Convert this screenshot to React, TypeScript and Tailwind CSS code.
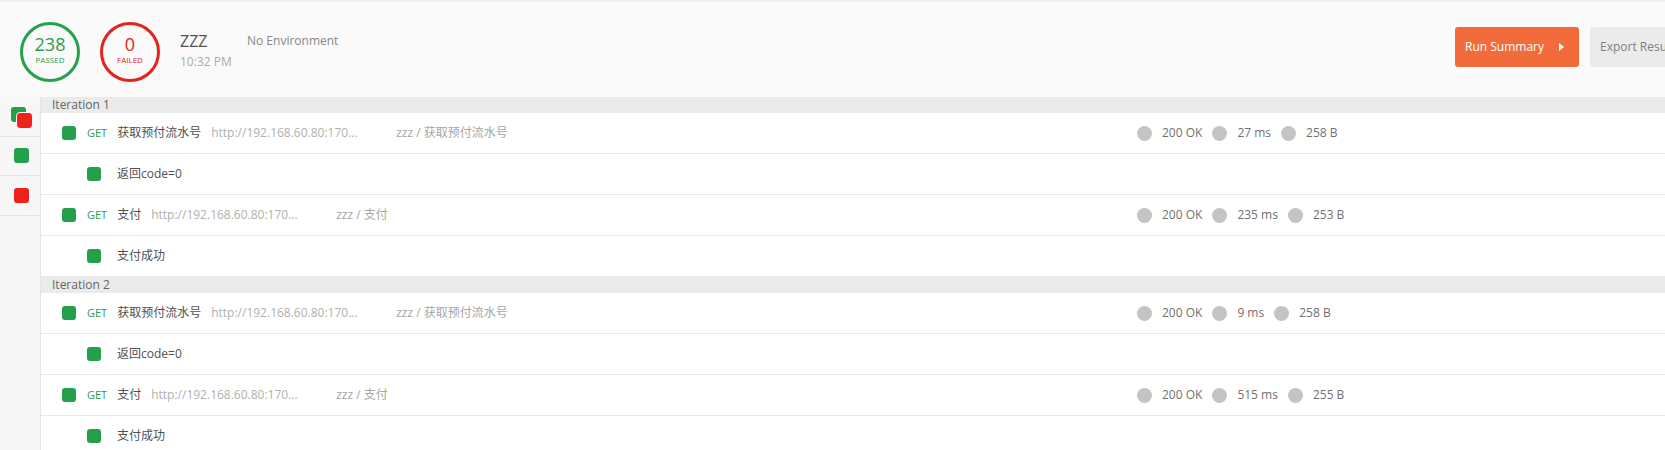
import React from "react"

const FONT = { fontFamily: '"Open Sans", "Noto Sans CJK SC", sans-serif' }

type Req = {
  name: string
  path: string
  test: string
  time: string
  size: string
}

const iterations: { title: string; requests: Req[] }[] = [
  {
    title: "Iteration 1",
    requests: [
      { name: "获取预付流水号", path: "zzz / 获取预付流水号", test: "返回code=0", time: "27 ms", size: "258 B" },
      { name: "支付", path: "zzz / 支付", test: "支付成功", time: "235 ms", size: "253 B" },
    ],
  },
  {
    title: "Iteration 2",
    requests: [
      { name: "获取预付流水号", path: "zzz / 获取预付流水号", test: "返回code=0", time: "9 ms", size: "258 B" },
      { name: "支付", path: "zzz / 支付", test: "支付成功", time: "515 ms", size: "255 B" },
    ],
  },
]

function StatCircle({ value, label, tone }: { value: string; label: string; tone: "pass" | "fail" }) {
  const pass = tone === "pass"
  return (
    <div
      className={[
        "w-[60px] h-[60px] rounded-full border-[3px] flex flex-col items-center pt-[8px] shrink-0",
        pass ? "border-[#27a04c] text-[#27a04c]" : "border-[#e5231b] text-[#e5231b]",
      ].join(" ")}
    >
      <span className="text-[18px] leading-[22px]">{value}</span>
      <span className="text-[8px] leading-[10px] uppercase">{label}</span>
    </div>
  )
}

function Dot() {
  return <span className="w-[15px] h-[15px] rounded-full bg-[#c4c4c4] shrink-0" />
}

function Stats({ time, size }: { time: string; size: string }) {
  return (
    <div className="flex items-center text-[12px] text-[#707070]">
      <Dot />
      <span className="ml-[10px] mr-[10px]">200 OK</span>
      <Dot />
      <span className="ml-[10px] mr-[10px]">{time}</span>
      <Dot />
      <span className="ml-[10px]">{size}</span>
    </div>
  )
}

function Square({ color = "green" }: { color?: "green" | "red" }) {
  return (
    <span
      className={[
        "w-[14px] h-[14px] rounded-[3px] shrink-0",
        color === "green" ? "bg-[#22a04a]" : "bg-[#ee2218]",
      ].join(" ")}
    />
  )
}

export default function App() {
  return (
    <div className="w-[1665px] h-[450px] overflow-hidden bg-white" style={FONT}>
      {/* Header */}
      <div className="h-[97px] bg-[#fafafa] border-t-2 border-[#efefef] flex items-start overflow-hidden">
        <div className="flex items-start pl-[20px] pt-[20px] gap-[20px]">
          <StatCircle value="238" label="Passed" tone="pass" />
          <StatCircle value="0" label="Failed" tone="fail" />
          <div className="flex flex-col w-[67px] pt-[8px]">
            <span className="text-[16px] leading-[22px] text-[#505050]">ZZZ</span>
            <span className="text-[12px] leading-[16px] text-[#aaaaaa] mt-[2px]">10:32 PM</span>
          </div>
        </div>
        <span className="text-[12px] leading-[16px] text-[#888888] pt-[31px]">No Environment</span>

        <div className="ml-auto -mr-[25px] flex items-center gap-[11px] pt-[25px]">
          <button className="h-[40px] w-[124px] rounded-[3px] bg-[#f26b3a] text-white text-[12px] flex items-center pl-[10px] pr-[15px]">
            <span>Run Summary</span>
            <svg className="ml-auto" width="5" height="8" viewBox="0 0 5 8">
              <path d="M0 0 L5 4 L0 8 Z" fill="#ffffff" />
            </svg>
          </button>
          <button className="h-[40px] w-[100px] rounded-[3px] bg-[#ebebeb] text-[#808080] text-[12px] text-left pl-[10px] whitespace-nowrap">
            Export Results
          </button>
        </div>
      </div>

      {/* Body */}
      <div className="flex h-[353px]">
        {/* Sidebar */}
        <div className="w-[41px] shrink-0 bg-[#f7f7f7] border-r border-[#e6e6e6] flex flex-col">
          <div className="h-[39.5px] border-b border-[#e6e6e6] relative">
            <span className="absolute left-[11px] top-[10px] w-[15px] h-[15px] rounded-[3px] bg-[#22a04a]" />
            <span className="absolute left-[16px] top-[15px] w-[17px] h-[17px] rounded-[4px] bg-[#ee2218] border-[1.5px] border-[#f7f7f7]" />
          </div>
          <div className="h-[39.5px] border-b border-[#e6e6e6] flex items-center pl-[14px]">
            <span className="w-[15px] h-[15px] rounded-[3px] bg-[#22a04a]" />
          </div>
          <div className="h-[39.5px] border-b border-[#e6e6e6] flex items-center pl-[14px]">
            <span className="w-[15px] h-[15px] rounded-[3px] bg-[#ee2218]" />
          </div>
        </div>

        {/* Results */}
        <div className="flex-1 flex flex-col">
          {iterations.map((it) => (
            <div key={it.title}>
              <div className="h-[16px] bg-[#ebebeb] pl-[11px] text-[12px] leading-[16px] text-[#666666]">
                {it.title}
              </div>
              {it.requests.map((r) => (
                <React.Fragment key={r.name}>
                  <div className="h-[41px] border-b border-[#e8e8e8] grid grid-cols-[1096px_1fr] items-center">
                    <div className="flex items-center pl-[21px] min-w-0">
                      <Square />
                      <span className="ml-[11px] text-[11px] text-[#2a9d4b]">GET</span>
                      <span className="ml-[10px] text-[12px] text-[#505050]">{r.name}</span>
                      <span className="ml-[10px] w-[185px] text-[12px] text-[#b0b0b0] whitespace-nowrap">
                        http://192.168.60.80:170...
                      </span>
                      <span className="text-[12px] text-[#a6a6a6]">{r.path}</span>
                    </div>
                    <Stats time={r.time} size={r.size} />
                  </div>
                  <div className="h-[41px] border-b border-[#e8e8e8] flex items-center pl-[46px]">
                    <Square />
                    <span className="ml-[16px] text-[12px] text-[#505050]">{r.test}</span>
                  </div>
                </React.Fragment>
              ))}
            </div>
          ))}
        </div>
      </div>
    </div>
  )
}
